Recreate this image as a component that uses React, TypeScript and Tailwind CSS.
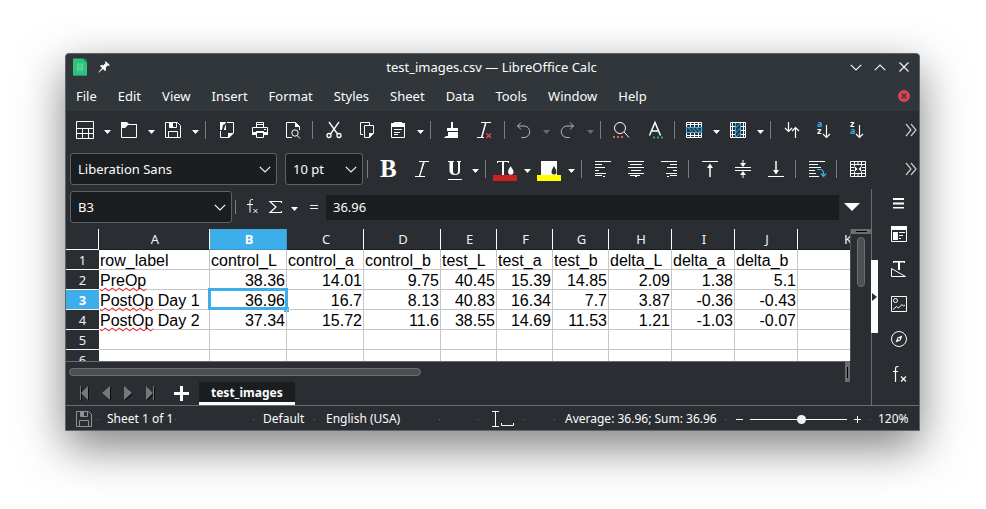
import React from "react";

type Kids = { children?: React.ReactNode };

function Icon({ children, className = "" }: Kids & { className?: string }) {
  return (
    <svg
      viewBox="0 0 24 24"
      className={"size-6 shrink-0 overflow-visible " + className}
      fill="none"
      stroke="currentColor"
      strokeWidth="1"
      aria-hidden="true"
    >
      {children}
    </svg>
  );
}

function Tool({ label, split, children }: Kids & { label: string; split?: boolean }) {
  return (
    <button
      type="button"
      aria-label={label}
      className={"flex h-8 w-[33px] shrink-0 items-center " + (split ? "pl-1" : "pl-1.5")}
    >
      <Icon>{children}</Icon>
    </button>
  );
}

function Drop({ label, dim }: { label: string; dim?: boolean }) {
  return (
    <button
      type="button"
      aria-label={label}
      className={"flex h-8 w-[11px] shrink-0 items-center " + (dim ? "text-[#6b6e71]" : "text-[#fcfcfc]")}
    >
      <svg viewBox="0 0 11 24" className="h-6 w-[11px]" fill="currentColor" aria-hidden="true">
        <path d="M2 12h7l-3.5 4z" />
      </svg>
    </button>
  );
}

function Sep() {
  return (
    <span className="w-2 shrink-0 pl-1">
      <span className="block h-[18px] w-px bg-[#7a7d80]" />
    </span>
  );
}

function Chevron({ className = "" }: { className?: string }) {
  return (
    <svg viewBox="0 0 12 7" className={"h-[7px] w-3 " + className} fill="none" stroke="#eff0f1" strokeWidth="1.2" aria-hidden="true">
      <path d="M.8.8 6 6 11.2.8" />
    </svg>
  );
}

function Combo({ label, value, className }: { label: string; value: string; className: string }) {
  return (
    <span className={"relative block h-8 shrink-0 " + className}>
      <select
        aria-label={label}
        defaultValue={value}
        className="h-full w-full appearance-none rounded-[3px] border border-[#5f6265] bg-[#1b1e20] pt-0.5 pl-[7px] text-[13px] text-[#fcfcfc]"
      >
        <option>{value}</option>
      </select>
      <Chevron className="pointer-events-none absolute top-[13px] right-[6px]" />
    </span>
  );
}

function More() {
  return (
    <button type="button" aria-label="More tools" className="mr-[2px] ml-auto flex h-8 w-3 items-center">
      <svg viewBox="0 0 12 14" className="h-[14px] w-3" fill="none" stroke="#c9cbcc" strokeWidth="1.2" aria-hidden="true">
        <path d="M1 1l5 6-5 6M6 1l5 6-5 6" />
      </svg>
    </button>
  );
}

function TitleBar() {
  return (
    <header className="flex h-[26px] items-center bg-[#31363b] px-[7px]">
      <div className="flex flex-1 items-center gap-[11px]">
        <svg viewBox="0 0 14 18" className="h-[18px] w-[14px]" aria-hidden="true">
          <path d="M0 .5h10l4 4V18H0z" fill="#2fc27f" />
          <path d="M10 0l4 4.500V1z" fill="#157a50" />
          <path d="M0 17h14v1H0z" fill="#1d9c62" />
          <path d="M4 5.500h6v7H4z" fill="#5cd39b" />
          <path d="M7 6v6" stroke="#2fc27f" />
        </svg>
        <svg viewBox="0 0 12 12" className="size-3" aria-hidden="true">
          <path d="M7.500 0 12 4.200l-1.300.6-.9-.2-2 2 .2 2.600-1 .8L5 8 1 11.600.4 11.200 4 7 2 5l.9-.9 2.500.1 2-2-.3-1z" fill="#fcfcfc" />
        </svg>
      </div>
      <h1 className="text-[13px] leading-5">test_images.csv — LibreOffice Calc</h1>
      <div className="flex flex-1 justify-end gap-3 pr-[2px]">
        <button type="button" aria-label="Minimize" className="flex h-4 w-3 items-center"><Chevron /></button>
        <button type="button" aria-label="Maximize" className="flex h-4 w-3 items-center"><Chevron className="rotate-180" /></button>
        <button type="button" aria-label="Close" className="flex h-4 w-3 items-center">
          <svg viewBox="0 0 12 12" className="size-3" stroke="#eff0f1" strokeWidth="1.200" aria-hidden="true"><path d="M1.500 1.500l9 9M10.500 1.500l-9 9" /></svg>
        </button>
      </div>
    </header>
  );
}

const menus = ["File", "Edit", "View", "Insert", "Format", "Styles", "Sheet", "Data", "Tools", "Window", "Help"];

function MenuBar() {
  return (
    <nav className="flex h-[31px] items-center gap-px bg-[#31363b] pr-[9px]">
      {menus.map((m) => (
        <button key={m} type="button" className="px-[10px] text-[13px] leading-5">{m}</button>
      ))}
      <button type="button" aria-label="Close document" className="ml-auto">
        <svg viewBox="0 0 12 12" className="size-3" aria-hidden="true">
          <circle cx="6" cy="6" r="6" fill="#da4453" />
          <path d="M3.500 3.500l5 5M8.500 3.500l-5 5" stroke="#31363b" strokeWidth="1.200" />
        </svg>
      </button>
    </nav>
  );
}

function StandardBar() {
  return (
    <div className="flex h-[38px] items-center pl-[3px]">
      <Tool label="New" split>
        <path d="M3.500 3.500h17v17h-17zM3.500 10.500h17M3.500 15.500h17M9.500 10.500v10M15.500 10.500v10" />
      </Tool>
      <Drop label="New options" />
      <Tool label="Open" split>
        <path d="M4 4h6l2 2h8v1h-9l-3 3H4z" fill="currentColor" stroke="none" />
        <path d="M4.500 9v10.500h15V6.500" />
      </Tool>
      <Drop label="Recent files" />
      <Tool label="Save" split>
        <path d="M4.500 4.500h12l3 3v12h-15zM8.500 4.500v5h7v-5M7.500 19.500v-6h9v6" />
        <path d="M8 4h4v5H8z" fill="currentColor" stroke="none" />
      </Tool>
      <Drop label="Save options" />
      <Sep />
      <Tool label="Export as PDF">
        <path d="M12 4.500h6.500V15M5.500 13v6.500H14" />
        <path d="M5 4h6l-1 2-2 1-1 5H5zM9 11l2-5v6H9zM13 20v-5h6l-5 5z" fill="currentColor" stroke="none" />
      </Tool>
      <Tool label="Print">
        <path d="M8.500 9V4.500h7V9M9 6.500h6M4.500 16v-6.500h15V16M8.500 14.500h7v5h-7zM16 11.500h2" />
        <path d="M4 14h4v3H4zM16 14h4v3h-4zM8 13h8v2H8z" fill="currentColor" stroke="none" />
      </Tool>
      <Tool label="Print Preview">
        <path d="M11 19.500H5.500v-15h9l4 4V12" />
        <path d="M14 4v5h5z" fill="currentColor" stroke="none" />
        <circle cx="14" cy="15" r="3.200" />
        <path d="M16 17.500l3 3" />
      </Tool>
      <Sep />
      <Tool label="Cut">
        <path d="M7 4l8.500 12M17 4L8.500 16" strokeWidth="1.300" />
        <circle cx="7" cy="17.500" r="2" strokeWidth="1.300" />
        <circle cx="17" cy="17.500" r="2" strokeWidth="1.300" />
      </Tool>
      <Tool label="Copy">
        <path d="M8 16.500H5.500v-12h9V7M9.500 7.500h9V15l-4 4.500h-5z" />
        <path d="M14 20v-5h5z" fill="currentColor" stroke="none" />
      </Tool>
      <Tool label="Paste" split>
        <path d="M5.500 6.500h13v13h-13z" />
        <path d="M5 5h3V4h8v1h3v4H5zM8 11h8v1H8zM8 14h6v1H8zM8 16h4v1H8z" fill="currentColor" stroke="none" />
      </Tool>
      <Drop label="Paste options" />
      <Sep />
      <Tool label="Clone Formatting">
        <path d="M11 4h2v6h5v3H7v-3h4zM8 14h10v6H4l2-2h2z" fill="currentColor" stroke="none" />
      </Tool>
      <Tool label="Clear Formatting">
        <path d="M8 4.500h10M4 19.500h7M12.500 4.500L8.500 19" />
        <path d="M13 5l-4 14" />
        <path d="M13.500 15.500l4.500 4.500M18 15.500L13.500 20" stroke="#da4453" strokeWidth="1.500" />
      </Tool>
      <Sep />
      <span className="flex text-[#b4b6b8]">
        <Tool label="Undo" split>
          <path d="M9 4.500L5.500 8 9 11.500M5.500 8H12a5.700 5.700 0 010 11.500H9.500" />
        </Tool>
        <Drop label="Undo history" dim />
        <Tool label="Redo" split>
          <path d="M14 4.500L17.500 8 14 11.500M17.500 8H11a5.700 5.700 0 000 11.500h2.500" />
        </Tool>
        <Drop label="Redo history" dim />
      </span>
      <Sep />
      <Tool label="Find and Replace" split>
        <circle cx="12" cy="10" r="5.500" />
        <path d="M16 14l5 5.500" />
        <path d="M5 18h2v2H5zM9 18h2v2H9zM13 18h2v2h-2z" fill="#d9694a" stroke="none" />
      </Tool>
      <Tool label="Spelling">
        <path d="M6.500 17.500L12 4.500l5.500 13M8.500 13h7" strokeWidth="1.500" />
        <path d="M10 18.500h2v2h-2zM14 18.500h2v2h-2zM18 18.500h2v2h-2z" fill="#27ae60" stroke="none" />
      </Tool>
      <Sep />
      <Tool label="Row" split>
        <path d="M4.500 4.500h15v15h-15zM4.500 6.500h15M4.500 17.500h15M8.500 4v5M12.500 4v5M16.500 4v5M8.500 15v5M12.500 15v5M16.500 15v5M4.500 9.500h15M4.500 14.500h15" />
        <path d="M4 9h17v6H4z" fill="#223b4c" stroke="none" />
        <path d="M4.500 9.500h15v5h-15zM6 9.500l5 5M10 9.500l5 5M14 9.500l5 5" stroke="#3daee9" />
      </Tool>
      <Drop label="Row options" />
      <Tool label="Column" split>
        <path d="M4.500 4.500h15v15h-15zM6.500 4.500v15M17.500 4.500v15M4 8.500h5M4 12.500h5M4 16.500h5M15 8.500h5M15 12.500h5M15 16.500h5" />
        <path d="M9 5h6v14H9z" fill="#223b4c" stroke="none" />
        <path d="M9.500 5v14M14.500 5v14M9.500 10l5-5M9.500 15l5-5M9.500 19.500l5-5" stroke="#3daee9" />
      </Tool>
      <Drop label="Column options" />
      <Sep />
      <Tool label="Sort">
        <path d="M8.500 4v9.500M5 10l3.500 3.500L12 10M15.500 20v-10M12 13l3.500-3.500L19 13" strokeWidth="1.200" />
      </Tool>
      <Tool label="Sort Ascending">
        <text x="4" y="9" fontSize="9" fontWeight="bold" fill="#3daee9" stroke="none">a</text>
        <text x="4" y="16" fontSize="9" fontWeight="bold" fill="currentColor" stroke="none">z</text>
        <path d="M13.500 7v12.500M10 16l3.500 3.500L17 16" strokeWidth="1.200" />
      </Tool>
      <Tool label="Sort Descending">
        <text x="4" y="9" fontSize="9" fontWeight="bold" fill="currentColor" stroke="none">z</text>
        <text x="4" y="16" fontSize="9" fontWeight="bold" fill="#3daee9" stroke="none">a</text>
        <path d="M13.500 7v12.500M10 16l3.500 3.500L17 16" strokeWidth="1.200" />
      </Tool>
      <More />
    </div>
  );
}

function FormatBar() {
  return (
    <div className="flex h-10 items-center pl-1">
      <Combo label="Font name" value="Liberation Sans" className="mr-2 w-[207px]" />
      <Combo label="Font size" value="10 pt" className="w-[78px]" />
      <Sep />
      <Tool label="Bold">
        <text x="3" y="20" fontSize="25" fontWeight="bold" fill="currentColor" stroke="none" className="font-['Liberation_Serif',serif]">B</text>
      </Tool>
      <Tool label="Italic">
        <path d="M9 4.500h10M5 19.500h10M14.500 4.500l-5 15M13.500 4.500l-4 15" />
      </Tool>
      <Tool label="Underline">
        <path d="M5 4h6v1h-1v9q0 3 2.500 3T15 14V5h-1V4h4v1h-1v9q0 4-5 4t-5.500-4V5H5z" fill="currentColor" stroke="none" />
        <path d="M5 22.500h14" />
      </Tool>
      <Drop label="Underline styles" />
      <Sep />
      <Tool label="Font Color" split>
        <path d="M4 4h12v2h-1V5h-4v13H9V5H5v1H4zM17.500 9q3 4 3 6a2.500 2.500 0 01-5.500 0q0-2 2.500-6z" fill="currentColor" stroke="none" />
        <path d="M0 18h24v6H0z" fill="#c9211e" stroke="none" />
      </Tool>
      <Drop label="Font color options" />
      <Tool label="Highlighting Color" split>
        <path d="M4 4h16v14H4z" fill="currentColor" stroke="none" />
        <path d="M17 9q2.500 4 2.500 6a2.500 2.500 0 01-5 0q0-2 2.500-6z" fill="#2a2e32" stroke="none" />
        <path d="M0 18h24v6H0z" fill="#ffff00" stroke="none" />
      </Tool>
      <Drop label="Highlighting options" />
      <Sep />
      <Tool label="Align Left">
        <path d="M4 4.500h16M4 7.500h7M4 10.500h10M4 13.500h4M4 16.500h11M4 18.500h7M12 19.500h2" />
      </Tool>
      <Tool label="Align Center">
        <path d="M4 4.500h16M6 7.500h12M4 10.500h16M7 13.500h10M4 16.500h16M6 18.500h10M11 19.500h2" />
      </Tool>
      <Tool label="Align Right">
        <path d="M4 4.500h16M13 7.500h7M10 10.500h10M16 13.500h4M9 16.500h11M13 18.500h7M10 19.500h2" />
      </Tool>
      <Sep />
      <Tool label="Align Top">
        <path d="M4 4.500h16" />
        <path d="M11.250 20V11H9l3-4.500 3 4.500h-2.250v9z" fill="currentColor" stroke="none" />
      </Tool>
      <Tool label="Center Vertically">
        <path d="M4 10.500h16M4 13.500h16M12 3v3M12 18v3" />
        <path d="M9 6h6l-3 4zM9 18h6l-3-4z" fill="currentColor" stroke="none" />
      </Tool>
      <Tool label="Align Bottom">
        <path d="M4 19.500h16" />
        <path d="M11.250 4v9H9l3 4.500 3-4.500h-2.250V4z" fill="currentColor" stroke="none" />
      </Tool>
      <Sep />
      <Tool label="Wrap Text">
        <path d="M4 4.500h16M4 7.500h9M4 10.500h12M4 13.500h6M4 16.500h7M4 19.500h10" />
        <path d="M12 12.500h3q3.500 0 3.500 4v2.500M16 16.500l2.500 3 2.500-3" stroke="#3daee9" strokeWidth="1.200" />
      </Tool>
      <Sep />
      <Tool label="Merge Cells">
        <path d="M4.500 4.500h15v15h-15zM4.500 7.500h15M4.500 16.500h15M4.500 10.500h4M4.500 13.500h4M15.500 10.500h4M15.500 13.500h4M8.500 4.500v5M12 4.500v3M15.500 4.500v5M8.500 14.500v5M12 16.500v3M15.500 14.500v5" />
        <path d="M9 9.500l2.500 2.500L9 14.500zM15 9.500L12.500 12l2.500 2.500z" fill="currentColor" stroke="none" />
      </Tool>
      <More />
    </div>
  );
}

function FormulaBar() {
  return (
    <div className="flex h-9 items-center pl-1">
      <Combo label="Name Box" value="B3" className="w-[162px]" />
      <span className="ml-[3px] h-[14px] w-px bg-[#7a7d80]" />
      <button type="button" aria-label="Function Wizard" className="ml-1">
        <Icon>
          <path d="M13 4.500h-1.500q-1.500 0-1.500 2v11M7 9.500h6M13.500 14l4 4M17.500 14l-4 4" />
        </Icon>
      </button>
      <button type="button" aria-label="Select Function">
        <Icon>
          <path d="M17.500 8V6.500H6l6 5.500-6 5.500h11.500V16" strokeWidth="1.200" />
        </Icon>
      </button>
      <span className="ml-px flex"><Drop label="Function options" /></span>
      <button type="button" aria-label="Formula" className="ml-2">
        <svg viewBox="0 0 12 24" className="h-6 w-3" stroke="#eff0f1" aria-hidden="true"><path d="M2 10.500h8M2 13.500h8" /></svg>
      </button>
      <input
        aria-label="Input line"
        defaultValue="36.96"
        className="ml-1.5 h-[25px] min-w-0 flex-1 bg-[#1b1e20] pl-[7px] text-[13px] text-[#fcfcfc] outline-none"
      />
      <button type="button" aria-label="Expand Formula Bar" className="mr-[11px] ml-[5px]">
        <svg viewBox="0 0 16 8" className="h-2 w-4" fill="#fcfcfc" aria-hidden="true"><path d="M0 0h16L8 8z" /></svg>
      </button>
    </div>
  );
}

const columns = [
  { name: "A", width: "w-[111px]" },
  { name: "B", width: "w-[77px]" },
  { name: "C", width: "w-[77px]" },
  { name: "D", width: "w-[77px]" },
  { name: "E", width: "w-[56px]" },
  { name: "F", width: "w-[56px]" },
  { name: "G", width: "w-[56px]" },
  { name: "H", width: "w-[63px]" },
  { name: "I", width: "w-[63px]" },
  { name: "J", width: "w-[63px]" },
  { name: "K", width: "w-[99px]" },
];

const rows = [
  ["row_label", "control_L", "control_a", "control_b", "test_L", "test_a", "test_b", "delta_L", "delta_a", "delta_b"],
  ["PreOp", "38.36", "14.01", "9.75", "40.45", "15.39", "14.85", "2.09", "1.38", "5.1"],
  ["PostOp Day 1", "36.96", "16.7", "8.13", "40.83", "16.34", "7.7", "3.87", "-0.36", "-0.43"],
  ["PostOp Day 2", "37.34", "15.72", "11.6", "38.55", "14.69", "11.53", "1.21", "-1.03", "-0.07"],
  [],
  [],
];

function CellText({ text }: { text: string }) {
  const m = /^(\w+Op)(.*)$/.exec(text);
  if (!m) return <>{text}</>;
  return (
    <>
      <span className="underline decoration-[#ff0000] decoration-wavy decoration-1 underline-offset-1 [text-decoration-skip-ink:none]">{m[1]}</span>
      {m[2]}
    </>
  );
}

function Sheet() {
  return (
    <div className="h-[132px] min-w-0 flex-1 overflow-hidden">
      <table className="w-[831px] table-fixed border-separate border-spacing-0">
        <colgroup>
          <col className="w-[33px]" />
          {columns.map((c) => <col key={c.name} className={c.width} />)}
        </colgroup>
        <thead>
          <tr className="h-[21px]">
            <td className="border-r border-b border-[#fcfcfc] p-0" />
            {columns.map((c) => (
              <th
                key={c.name}
                scope="col"
                className={
                  "h-[21px] border-r border-b p-0 pl-0.5 text-center text-[13px] leading-5 " +
                  (c.name === "B"
                    ? "border-[#3498cf] bg-[#3daee9] font-bold text-white"
                    : "border-r-[#fcfcfc] border-b-[#1b1e20] font-normal text-[#eff0f1]")
                }
              >
                {c.name}
              </th>
            ))}
          </tr>
        </thead>
        <tbody className="bg-white text-black">
          {rows.map((r, i) => (
            <tr key={i} className="h-5">
              <th
                scope="row"
                className={
                  "h-5 border-b border-[#fcfcfc] p-0 pt-[2px] text-center text-[13px] leading-[17px] " +
                  (i === 2 ? "bg-[#3daee9] font-bold text-white" : "bg-[#2a2e32] font-normal text-[#eff0f1]")
                }
              >
                {i + 1}
              </th>
              {columns.map((c, j) => (
                <td
                  key={c.name}
                  className={
                    "relative h-5 border-r border-b border-[#c6c6c6] px-px pt-[2px] pb-0 font-['Liberation_Sans',Arial,sans-serif] text-[16px] leading-[17px] whitespace-nowrap " +
                    (i > 0 && j > 0 ? "text-right" : "text-left")
                  }
                >
                  <CellText text={r[j] ?? ""} />
                  {i === 2 && j === 1 && (
                    <>
                      <span className="absolute -inset-x-[2px] -top-[2px] -bottom-px border-[3px] border-[#3daee9]" />
                      <span className="absolute -right-[3px] -bottom-[3px] size-[5px] bg-[#3daee9]" />
                    </>
                  )}
                </td>
              ))}
            </tr>
          ))}
        </tbody>
      </table>
    </div>
  );
}

function SheetTabs() {
  return (
    <div className="flex h-[23px] items-start">
      <span className="flex h-[22px] items-center text-[#76797c]">
        {[
          ["First sheet", "M2 1v14h1V8l7 7V1L3 8V1z"],
          ["Previous sheet", "M10 1v14L2 8z"],
          ["Next sheet", "M2 1v14l8-7z"],
          ["Last sheet", "M2 1v14l7-7v7h1V1H9v7z"],
        ].map(([label, d], i) => (
          <button key={label} type="button" aria-label={label} className={"flex " + (i === 0 ? "ml-3" : "ml-[10px]")}>
            <svg viewBox="0 0 12 16" className="h-4 w-3" aria-hidden="true">
              <path d={d} fill="#0c0d0e" transform="translate(1 1)" />
              <path d={d} fill="currentColor" />
            </svg>
          </button>
        ))}
        <button type="button" aria-label="Add sheet" className="ml-[18px] flex">
          <svg viewBox="0 0 15 15" className="size-[15px]" fill="#fcfcfc" aria-hidden="true"><path d="M6 0h3v6h6v3H9v6H6V9H0V6h6z" /></svg>
        </button>
      </span>
      <button type="button" className="ml-[10px] h-[23px] border-b-[3px] border-[#fcfcfc] bg-[#1b1e20] px-3 pt-0.5 text-[12px] leading-[18px] font-bold text-[#fcfcfc]">
        test_images
      </button>
    </div>
  );
}

function SideBar() {
  return (
    <aside className="relative flex w-12 shrink-0 flex-col items-center border-l border-[#6b6e71] pl-1.5">
      <span className="absolute top-[71px] -left-px flex h-[73px] w-[7px] items-center bg-[#fcfcfc]">
        <svg viewBox="0 0 5 8" className="ml-px h-2 w-[5px]" fill="#2a2e32" aria-hidden="true"><path d="M0 0l5 4-5 4z" /></svg>
      </span>
      <button type="button" aria-label="Sidebar Settings" className="mt-0.5 mb-[7px]">
        <Icon><path d="M6 7h11v2H6zM6 11.500h11v2H6zM6 16h11v1.500H6z" fill="currentColor" stroke="none" /></Icon>
      </button>
      <div className="flex flex-col gap-[11px]">
        <button type="button" aria-label="Properties">
          <Icon>
            <path d="M4.500 6.500h15v13h-15zM12 10.500h6M12 13.500h4M12 16.500h2" />
            <path d="M4 4h16v4H4zM6 10h5v8H6z" fill="currentColor" stroke="none" />
          </Icon>
        </button>
        <button type="button" aria-label="Styles">
          <Icon>
            <path d="M4.500 11.500v8h14z" />
            <path d="M6 4h12v2h-1V5.500h-4V13h-2V5.500H7V6H6z" fill="currentColor" stroke="none" />
          </Icon>
        </button>
        <button type="button" aria-label="Gallery">
          <Icon>
            <path d="M4.500 4.500h15v15h-15z" />
            <circle cx="8.500" cy="8.500" r="2" />
            <path d="M6 17.500l3.500-3 2 1.500 3.500-3.500 1.500 1.500 1.500-1" />
          </Icon>
        </button>
        <button type="button" aria-label="Navigator">
          <Icon>
            <circle cx="12" cy="12" r="7.500" />
            <path d="M15.500 8.500l-2 5-5 2 2-5z" fill="currentColor" stroke="none" />
            <circle cx="12" cy="12" r="1" fill="#2a2e32" stroke="none" />
          </Icon>
        </button>
        <button type="button" aria-label="Functions">
          <Icon><path d="M11.500 4.500h-1q-2 0-2 2.500v13M6 9.500h5M14 14.500l5 5M19 14.500l-5 5" strokeWidth="1.200" /></Icon>
        </button>
      </div>
    </aside>
  );
}

function Cell({ className, children }: Kids & { className: string }) {
  return (
    <div className={"flex h-full items-center " + className}>
      {children}
      <span className="ml-auto size-px bg-[#6b6e71]" />
    </div>
  );
}

function StatusBar() {
  return (
    <footer className="flex h-[25px] items-center border-t border-[#6b6e71] pt-0.5 text-[12px] leading-5 whitespace-nowrap">
      <Cell className="w-8 pl-[10px] text-[#8f9294]">
        <svg viewBox="4 4 16 16" className="size-4" fill="none" stroke="currentColor" aria-label="Document saved" role="img">
          <path d="M4.500 4.500h12l3 3v12h-15zM8.500 4.500v5h7v-5M7.500 19.500v-6h9v6" />
          <path d="M8 4h4v5H8z" fill="currentColor" stroke="none" />
        </svg>
      </Cell>
      <Cell className="w-[78px] pl-[9px]">Sheet 1 of 1</Cell>
      <Cell className="w-[78px]" />
      <Cell className="w-[61px] pl-[9px]">Default</Cell>
      <Cell className="min-w-0 flex-1 pl-[11px]">
        English (USA)
        <span className="ml-auto size-px bg-[#6b6e71]" />
      </Cell>
      <Cell className="w-[46px] pl-3">
        <svg viewBox="0 0 24 16" className="h-4 w-6" fill="none" stroke="#fcfcfc" aria-label="Selection mode" role="img">
          <path d="M1 .5h7M1 15.500h7M4.500 1v14M10.500 12v2.500h12V12" />
        </svg>
      </Cell>
      <Cell className="w-[30px]" />
      <Cell className="w-[171px] pl-[10px]">Average: 36.96; Sum: 36.96</Cell>
      <Cell className="w-[145px] pl-[10px]">
        <button type="button" aria-label="Zoom out" className="flex">
          <svg viewBox="0 0 7 7" className="size-[7px]" stroke="#fcfcfc" aria-hidden="true"><path d="M0 3.500h7" /></svg>
        </button>
        <input
          type="range"
          aria-label="Zoom"
          min="0"
          max="100"
          defaultValue="53"
          className="mx-[7px] h-[9px] w-[97px] appearance-none bg-transparent [&::-webkit-slider-runnable-track]:h-px [&::-webkit-slider-runnable-track]:bg-[#fcfcfc] [&::-webkit-slider-thumb]:-mt-1 [&::-webkit-slider-thumb]:size-[9px] [&::-webkit-slider-thumb]:appearance-none [&::-webkit-slider-thumb]:rounded-full [&::-webkit-slider-thumb]:bg-[#eff0f1]"
        />
        <button type="button" aria-label="Zoom in" className="flex">
          <svg viewBox="0 0 7 7" className="size-[7px]" stroke="#fcfcfc" aria-hidden="true"><path d="M0 3.500h7M3.500 0v7" /></svg>
        </button>
      </Cell>
      <span className="w-12 pl-[7px]">120%</span>
    </footer>
  );
}

export default function App() {
  return (
    <div className="bg-white pt-[53px] pr-[66px] pb-[78px] pl-[65px] font-['Noto_Sans',sans-serif] text-[#fcfcfc]">
      <main className="overflow-hidden rounded-t-[4px] border border-[#5f6468] bg-[#2a2e32] shadow-[0_16px_46px_rgba(0,0,0,0.5)]">
        <TitleBar />
        <MenuBar />
        <StandardBar />
        <FormatBar />
        <div className="flex">
          <div className="flex min-w-0 flex-1 flex-col">
            <FormulaBar />
            <div className="mt-1 flex">
              <Sheet />
              <div className="flex w-[21px] shrink-0 flex-col items-center border-l border-[#4d5053]">
                <span className="flex h-[5px] w-full items-center justify-center bg-[#6b6e71]"><span className="h-px w-[11px] bg-black" /></span>
                <span className="mt-[3px] h-[50px] w-2 rounded-full border border-[#6b6e71] bg-[#4d5053]" />
              </div>
            </div>
            <div className="mr-[21px] flex h-[21px] items-start justify-between border-t border-[#6b6e71] pl-[3px]">
              <span className="mt-[6px] h-2 w-[352px] rounded-full border border-[#6b6e71] bg-[#4d5053]" />
              <span className="flex h-5 w-[5px] items-center justify-center bg-[#6b6e71]"><span className="h-[11px] w-px bg-black" /></span>
            </div>
            <SheetTabs />
          </div>
          <SideBar />
        </div>
        <StatusBar />
      </main>
    </div>
  );
}
